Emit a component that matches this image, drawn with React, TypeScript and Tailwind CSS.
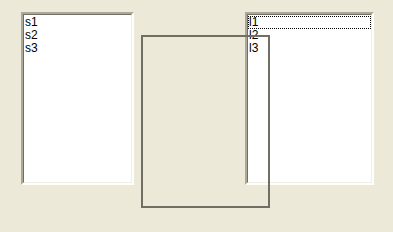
import React from 'react';

const ListBox: React.FC<{ items: string[]; width: string; focused?: number }> = ({ items, width, focused }) => (
  <div className={`${width} h-[173px] border-2 border-t-[#aca899] border-l-[#aca899] border-r-white border-b-white`}>
    <div className="h-full border border-t-[#716f64] border-l-[#716f64] border-r-[#f1efe2] border-b-[#f1efe2] bg-white pt-[1px]">
      {items.map((it, i) => (
        <div
          key={it}
          className={`h-[13px] pl-0 text-[12px] leading-[11px] text-black ${i === focused ? 'border border-dotted border-black' : 'border border-transparent'}`}
        >
          {it}
        </div>
      ))}
    </div>
  </div>
);

export default function App() {
  return (
    <div
      className="relative w-[393px] h-[232px] bg-[#ece9d8] overflow-hidden"
      style={{ fontFamily: '"Liberation Sans", Arial, sans-serif' }}
    >
      <div className="flex pt-[12px] pl-[21px] gap-[111px]">
        <ListBox items={['s1', 's2', 's3']} width="w-[113px]" />
        <ListBox items={['l1', 'l2', 'l3']} width="w-[129px]" focused={0} />
      </div>
      <div className="absolute left-[141px] top-[35px] w-[129px] h-[173px] border-2 border-[#716f64]" />
    </div>
  );
}
